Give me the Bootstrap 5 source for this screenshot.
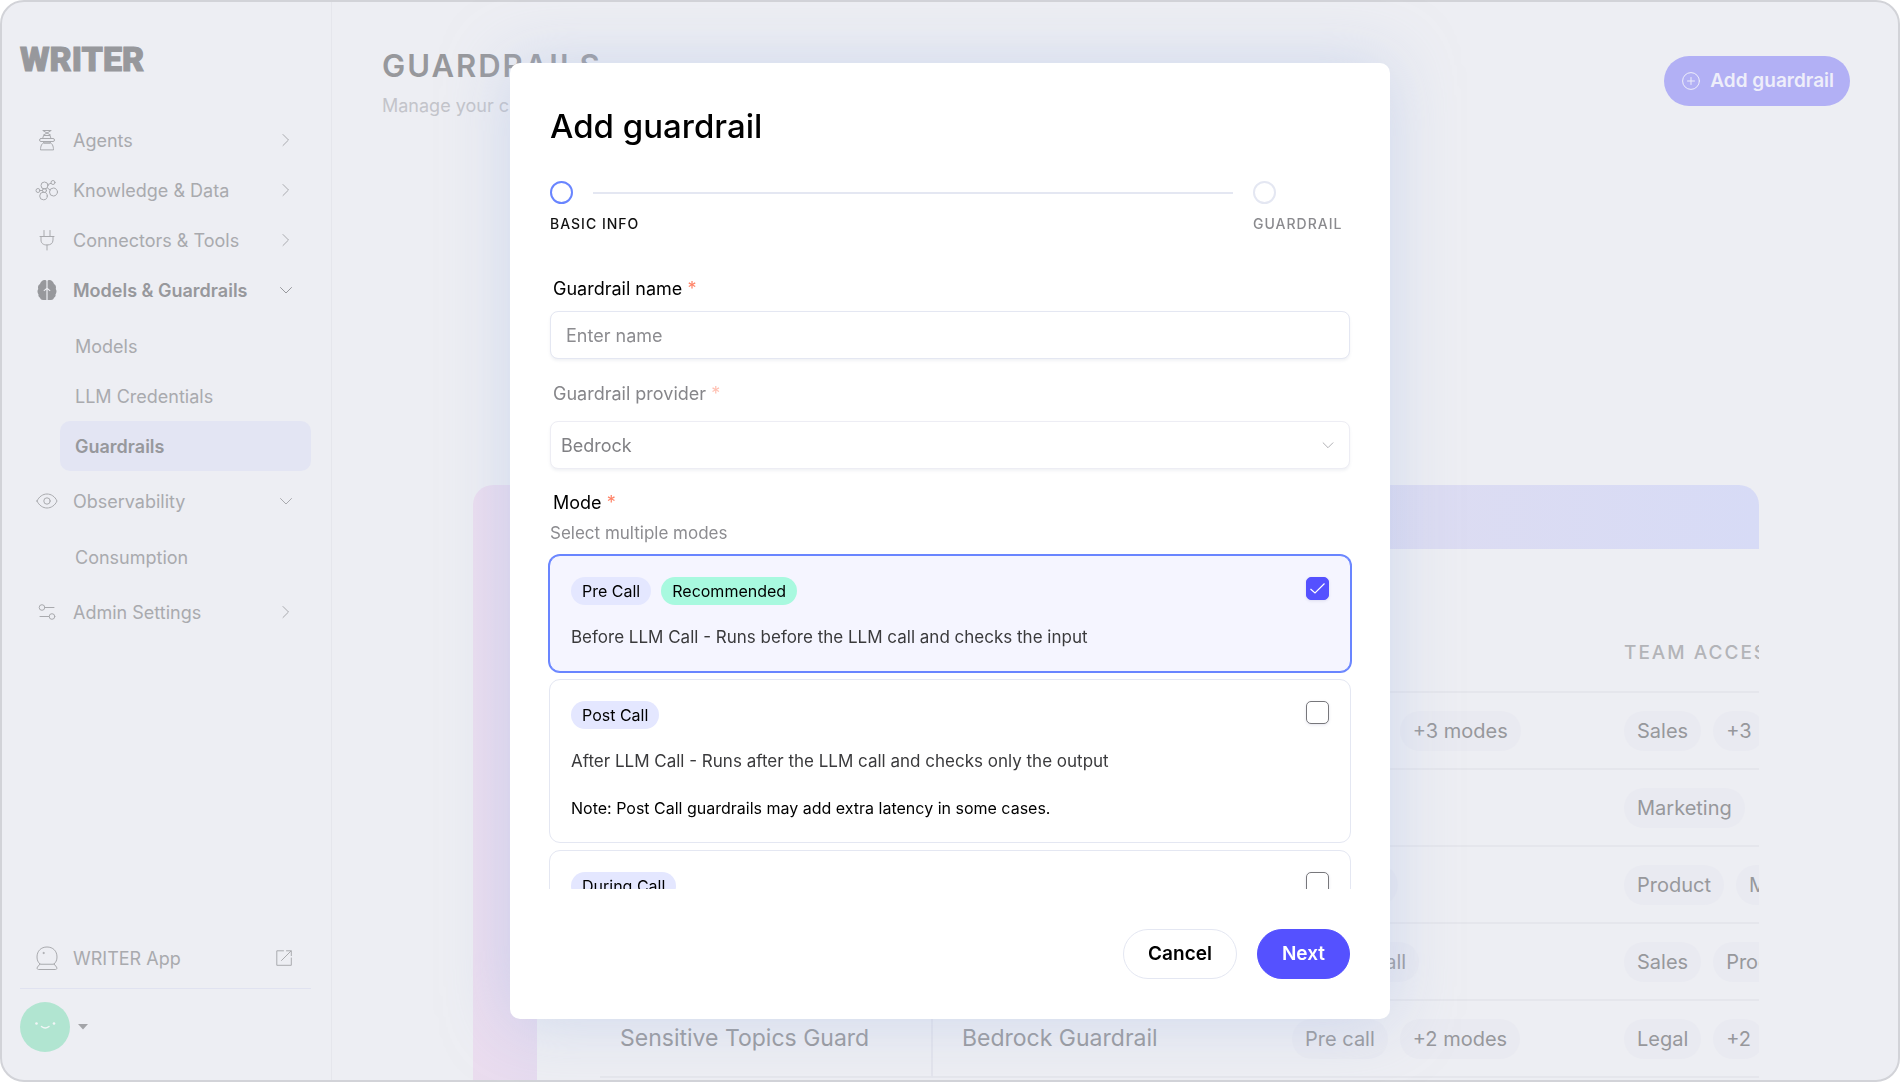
<!DOCTYPE html>
<html lang="en">
<head>
<meta charset="utf-8">
<meta name="viewport" content="width=device-width, initial-scale=1">
<title>Writer – Guardrails</title>
<link href="https://cdn.jsdelivr.net/npm/bootstrap@5.3.0/dist/css/bootstrap.min.css" rel="stylesheet">
<style>
  :root { --ink: #97989c; --soft: #a9aaae; --faint: #c3c4ca; --wash: #edeef3; --hair: #e5e6ec; --brand: #5551ff; --ring: #6985ff; --edge: #e4e7f2; }
  body { font-family: Inter, "Open Sans", sans-serif; background: #fff; color: #000; }
  a { text-decoration: none; }
  svg { display: block; fill: none; stroke: currentColor; stroke-linecap: round; stroke-linejoin: round; }
  .shell { height: 100vh; background: var(--wash); border: 2px solid #d2d3d8; border-radius: 24px; }

  /* sidebar */
  .sidebar { width: 330px; flex: none; border-right: 1px solid var(--hair); padding: 32px 20px 28px 18px; }
  .wordmark { font-family: Roboto, Inter, sans-serif; font-size: 34px; font-weight: 900; line-height: 50px; color: var(--ink); -webkit-text-stroke: 1px var(--ink); margin-bottom: 31px; }
  .side-link { height: 50px; padding: 0 19px 0 15px; gap: 14px; font-size: 18px; color: var(--soft); }
  .side-link.open { color: var(--ink); font-weight: 600; }
  .side-link svg { flex: none; }
  .sub { margin: 6px 0 5px 40px; }
  .sub a { height: 50px; padding-left: 15px; border-radius: 10px; font-size: 18px; color: var(--soft); }
  .sub a.on { background: #e3e5f3; color: var(--ink); font-weight: 600; }
  .side-foot { border-top: 1px solid #e0e2f0; padding-top: 13px; margin-top: 5px; }

  /* page behind the dialog */
  .content-area { padding: 54px 48px 0 50px; }
  .page-title { font-size: 31px; font-weight: 600; letter-spacing: 2px; line-height: 20px; color: var(--ink); margin-bottom: 16px; }
  .page-sub { font-size: 18px; line-height: 28px; color: var(--faint); }
  .btn-add { height: 50px; border-radius: 25px; padding: 0 16px 0 18px; gap: 10px; background: #b2b0f5; color: #eeeefa; border: 0; font-size: 19px; font-weight: 600; }
  .hero { margin: 365px 91px 0; padding: 64px 0 0 64px; border-radius: 20px 20px 0 0; background: linear-gradient(90deg, #ebddef 0, #e0d9ef 10%, #d8d7f0 45%, #dcdcf2 75%, #d7dbf6 100%); overflow: hidden; }
  .hero-inner { background: var(--wash); height: 100%; padding-left: 63px; overflow: hidden; }
  .grid { width: 1290px; table-layout: fixed; border-collapse: separate; border-spacing: 0; color: var(--ink); }
  .grid th { height: 144px; vertical-align: bottom; padding: 0 0 24px 16px; font-size: 19px; font-weight: 500; line-height: 28px; letter-spacing: 2px; color: #b3b4b8; border-bottom: 2px solid var(--hair); }
  .grid td { height: 77px; padding: 0 0 0 16px; border-bottom: 2px solid var(--hair); font-size: 23px; white-space: nowrap; }
  .grid td:nth-child(1) { padding-left: 20px; }
  .grid td:nth-child(2) { padding-left: 29px; }
  .grid td:first-child, .grid th:first-child { border-right: 2px solid #e3e4ec; }
  .tag { display: inline-block; height: 40px; line-height: 40px; padding: 0 13px; border-radius: 20px; background: #e9eaf1; font-size: 20px; margin-right: 12px; vertical-align: middle; }

  /* dialog */
  .modal { --bs-modal-width: 880px; overflow: hidden; }
  .modal-dialog { margin-top: 63px; margin-bottom: 63px; }
  .modal-content { height: calc(100vh - 126px); border: 0; border-radius: 10px; padding: 40px 0; box-shadow: 0 0 64px rgba(176, 193, 232, .5); }
  .modal-header { padding: 0 40px; border: 0; }
  .modal-title { font-size: 33px; font-weight: 500; line-height: 46px; margin-bottom: 2px; }
  .steps { padding: 30px 40px 41px; gap: 20px; }
  .dot { width: 23px; height: 23px; border: 2px solid var(--edge); border-radius: 50%; margin-bottom: 10px; }
  .step { flex: none; font-size: 14px; font-weight: 500; line-height: 20px; letter-spacing: 1px; color: #8a8a8e; }
  .step.first { width: 23px; white-space: nowrap; color: #111; }
  .step.first .dot { border-color: var(--ring); }
  .step.last { width: 97px; }
  .rail { height: 2px; margin-top: 11px; background: var(--edge); }
  .modal-body { padding: 0 40px; overflow-y: auto; scrollbar-width: none; }
  .modal-body::-webkit-scrollbar { display: none; }
  .lbl { font-size: 18px; line-height: 28px; padding-left: 3px; display: block; margin-bottom: 8px; }
  .lbl.dim { margin: 21px 0 13px; }
  .lbl.group { margin: 20px 0 4px; }
  .req { color: #ff8266; }
  .box { height: 48px; border: 1px solid var(--edge); border-radius: 8px; font-size: 18px; padding: 0 15px; box-shadow: 0 2px 3px rgba(120, 125, 160, .1); }
  .box::placeholder { color: #8c8c90; }
  .box.pick { background-color: #fff; padding-left: 10px; color: #808084; border-color: #ededf4; opacity: 1; background-image: url("data:image/svg+xml,%3Csvg xmlns='http://www.w3.org/2000/svg' viewBox='0 0 12 12'%3E%3Cpath fill='none' stroke='%23b0b0b4' d='M.8 3.5 6 8.7l5.200-5.200'/%3E%3C/svg%3E"); background-size: 12px; background-position: right 15px center; }
  .dim { color: #86868a; }
  .dim .req { color: #ffc0b2; }
  .hint { font-size: 17px; line-height: 24px; color: #8c8c90; margin-bottom: 10px; }
  .opts { gap: 7px; margin: 0 -1px; }
  .opt { border: 1px solid var(--edge); border-radius: 11px; padding: 21px 21px 22px; cursor: pointer; }
  .opt.on { border-color: var(--ring); box-shadow: 0 0 0 1px var(--ring); background: #f5f5ff; }
  .chips { gap: 10px; }
  .chip { height: 28px; line-height: 28px; border-radius: 14px; padding: 0 11px; font-size: 16px; background: #e4e7ff; }
  .chip.good { background: #a8f9df; }
  .opt p { font-size: 17px; line-height: 24px; margin: 20px 0 0; color: #3a3a3c; }
  .opt p.note { font-size: 16px; margin-top: 23px; color: #000; }
  .opt .form-check-input { width: 23px; height: 23px; margin: 0; border: 1px solid #77777b; border-radius: 5px; box-shadow: 0 1px 3px rgba(80, 80, 140, .15); }
  .opt .form-check-input:checked { background-color: var(--brand); border-color: var(--brand); background-size: 17px; background-image: url("data:image/svg+xml,%3Csvg xmlns='http://www.w3.org/2000/svg' viewBox='0 0 17 17'%3E%3Cpath fill='none' stroke='white' stroke-width='1.200' d='M1.500 9 6 13 15.500 3.500'/%3E%3C/svg%3E"); }
  .modal-footer { padding: 40px 40px 0; border: 0; gap: 20px; }
  .pill-btn { height: 50px; border-radius: 25px; padding: 0 24px; margin: 0; font-size: 19px; font-weight: 600; color: #000; border: 1px solid var(--edge); }
  .pill-btn.go, .pill-btn.go:hover { background: var(--brand); border-color: var(--brand); color: #fff; }
</style>
<script src="https://cdn.jsdelivr.net/npm/bootstrap@5.3.0/dist/js/bootstrap.bundle.min.js"></script>
</head>
<body>
<div class="shell d-flex overflow-hidden">
  <nav class="sidebar d-flex flex-column" aria-label="Main">
    <div class="wordmark">WRITER</div>
    <a href="#" class="side-link d-flex align-items-center">
      <svg width="24" height="24" viewBox="0 0 24 24"><path d="M8 2.500h8M8.500 3l7 4M15.500 3l-7 4M9 7.500h6l1 3H8zM6 10.500h12a1.500 1.500 0 0 1 0 3H6a1.500 1.500 0 0 1 0-3zM8 13.500l1 1.500h6l1-1.500M5.500 21.500c0-3.500 1.500-6.500 3.500-6.500h6c2 0 3.500 3 3.500 6.500z"/></svg>
      <span class="flex-grow-1">Agents</span>
      <svg width="12" height="14" viewBox="0 0 12 14"><path d="M3 1.500 8.500 7 3 12.500"/></svg>
    </a>
    <a href="#" class="side-link d-flex align-items-center">
      <svg width="24" height="24" viewBox="0 0 24 24"><circle cx="9.500" cy="7.500" r="3.500"/><circle cx="18" cy="4.500" r="2"/><circle cx="18.500" cy="14" r="4"/><circle cx="8.500" cy="18" r="3.800"/><circle cx="3" cy="12.500" r="2"/><circle cx="9.500" cy="12.500" r="2"/><path d="M13 6.500l3-1.200M5 12.500h2.500M12.500 10l2.500 2"/></svg>
      <span class="flex-grow-1">Knowledge &amp; Data</span>
      <svg width="12" height="14" viewBox="0 0 12 14"><path d="M3 1.500 8.500 7 3 12.500"/></svg>
    </a>
    <a href="#" class="side-link d-flex align-items-center">
      <svg width="24" height="24" viewBox="0 0 24 24"><path d="M5 8.500h14M6 8.500V12c0 3.500 2.500 5 6 5s6-1.500 6-5V8.500M9 2.500v6M15 2.500v6M12 17v5"/></svg>
      <span class="flex-grow-1">Connectors &amp; Tools</span>
      <svg width="12" height="14" viewBox="0 0 12 14"><path d="M3 1.500 8.500 7 3 12.500"/></svg>
    </a>
    <a href="#" class="side-link open d-flex align-items-center">
      <svg width="24" height="24" viewBox="0 0 24 24" stroke-width="0"><path fill="currentColor" d="M11.400 3v7L8.500 12.500l.6.700 2.300-1.800V22H8c-1.500 0-2.500-1-3-2.300-1.500-.6-1.800-2-1.500-3.200-1.300-1.700-1.300-4.300-.3-5.500C2.500 8.500 3.500 6.500 5 6c.5-2 2.500-4 4.500-4 1 0 1.900.3 1.900 1zM12.600 3v7l2.900 2.500-.6.700-2.300-1.800V22H16c1.500 0 2.500-1 3-2.300 1.500-.6 1.800-2 1.500-3.200 1.300-1.700 1.300-4.300.3-5.500.7-2.500-.3-4.500-1.800-5-.5-2-2.500-4-4.500-4-1 0-1.900.3-1.900 1z"/></svg>
      <span class="flex-grow-1">Models &amp; Guardrails</span>
      <svg width="12" height="14" viewBox="0 0 12 14"><path d="M.5 4.500 6 10l5.500-5.500"/></svg>
    </a>
    <div class="sub">
      <a href="#" class="d-flex align-items-center">Models</a>
      <a href="#" class="d-flex align-items-center">LLM Credentials</a>
      <a href="#" class="on d-flex align-items-center" aria-current="page">Guardrails</a>
    </div>
    <a href="#" class="side-link d-flex align-items-center">
      <svg width="24" height="24" viewBox="0 0 24 24"><path d="M2 12c2-4.500 6-7 10-7s8 2.500 10 7c-2 4.500-6 7-10 7s-8-2.500-10-7z"/><circle cx="12" cy="12" r="3.200"/></svg>
      <span class="flex-grow-1">Observability</span>
      <svg width="12" height="14" viewBox="0 0 12 14"><path d="M.5 4.500 6 10l5.500-5.500"/></svg>
    </a>
    <div class="sub"><a href="#" class="d-flex align-items-center">Consumption</a></div>
    <a href="#" class="side-link d-flex align-items-center">
      <svg width="24" height="24" viewBox="0 0 24 24"><circle cx="7" cy="7.500" r="2.800"/><path d="M10 7.500h9M5 16.500h9"/><circle cx="17" cy="16.500" r="2.800"/></svg>
      <span class="flex-grow-1">Admin Settings</span>
      <svg width="12" height="14" viewBox="0 0 12 14"><path d="M3 1.500 8.500 7 3 12.500"/></svg>
    </a>
    <div class="mt-auto">
      <a href="#" class="side-link d-flex align-items-center">
        <svg width="24" height="26" viewBox="0 0 24 26"><path d="M5 19c-2-1.500-3-4-3-7C2 6 6 2 12 2s10 4 10 10c0 3-1 5.500-3 7zM5 19l-2.500 3c-.8 1.300-.3 2.500 1 2.500h17c1.300 0 1.800-1.200 1-2.500L19 19"/><circle cx="8.500" cy="8" r=".6"/></svg>
        <span class="flex-grow-1">WRITER App</span>
        <svg width="16" height="16" viewBox="0 0 16 16"><path d="M7.500.8H.8v14.500h14.500V8M10.500.8h4.800v4.800M15 1 5.500 10.500"/></svg>
      </a>
      <div class="side-foot d-flex align-items-center gap-2">
        <svg width="50" height="50" viewBox="0 0 50 50" stroke-width="0" role="img" aria-label="Account"><circle cx="25" cy="25" r="25" fill="#b1e5d1"/><circle cx="16.500" cy="21.500" r="1.300" fill="#f2f6f6"/><circle cx="34" cy="21.500" r="1.300" fill="#f2f6f6"/><path d="M21.500 24.500q3.700 3 7.500 0" fill="none" stroke="#f2f6f6" stroke-width="1.500"/></svg>
        <svg width="10" height="6" viewBox="0 0 10 6" stroke-width="0"><path d="M0 0h10L5 5.500z" fill="#a3a4a8"/></svg>
      </div>
    </div>
  </nav>

  <main class="content-area flex-grow-1 d-flex flex-column overflow-hidden">
    <div class="d-flex justify-content-between align-items-start">
      <div>
        <h1 class="page-title">GUARDRAILS</h1>
        <div class="page-sub">Manage your c</div>
      </div>
      <button type="button" class="btn btn-add d-flex align-items-center">
        <svg width="18" height="18" viewBox="0 0 18 18"><circle cx="9" cy="9" r="8.400"/><path d="M9 5.500v7M5.500 9h7"/></svg>
        Add guardrail
      </button>
    </div>
    <section class="hero flex-grow-1">
      <div class="hero-inner">
        <table class="grid">
          <colgroup><col style="width:333px"><col style="width:343px"><col style="width:332px"><col></colgroup>
          <thead><tr><th></th><th></th><th></th><th>TEAM ACCESS</th></tr></thead>
          <tbody>
            <tr><td></td><td></td><td><span class="tag">Pre call</span><span class="tag">+3 modes</span></td><td><span class="tag">Sales</span><span class="tag">+3</span></td></tr>
            <tr><td></td><td></td><td></td><td><span class="tag">Marketing</span></td></tr>
            <tr><td></td><td></td><td><span class="tag">Post call</span></td><td><span class="tag">Product</span><span class="tag">Marketing</span></td></tr>
            <tr><td></td><td></td><td><span class="tag">During call</span></td><td><span class="tag">Sales</span><span class="tag">Product</span></td></tr>
            <tr><td>Sensitive Topics Guard</td><td>Bedrock Guardrail</td><td><span class="tag">Pre call</span><span class="tag">+2 modes</span></td><td><span class="tag">Legal</span><span class="tag">+2</span></td></tr>
          </tbody>
        </table>
      </div>
    </section>
  </main>
</div>

<div class="modal d-block" role="dialog" aria-labelledby="dlg-title">
  <div class="modal-dialog">
    <form class="modal-content">
      <div class="modal-header"><h2 class="modal-title" id="dlg-title">Add guardrail</h2></div>
      <div class="steps d-flex">
        <div class="step first"><div class="dot"></div>BASIC INFO</div>
        <div class="rail flex-grow-1"></div>
        <div class="step last"><div class="dot"></div>GUARDRAIL</div>
      </div>
      <div class="modal-body">
        <label class="lbl" for="g-name">Guardrail name <span class="req">*</span></label>
        <input id="g-name" class="form-control box" type="text" placeholder="Enter name">
        <label class="lbl dim" for="g-prov">Guardrail provider <span class="req">*</span></label>
        <select id="g-prov" class="form-select box pick" disabled><option>Bedrock</option></select>
        <div class="lbl group">Mode <span class="req">*</span></div>
        <div class="hint">Select multiple modes</div>
        <div class="opts d-flex flex-column">
          <label class="opt on d-block">
            <span class="d-flex justify-content-between">
              <span class="chips d-flex"><span class="chip">Pre Call</span><span class="chip good">Recommended</span></span>
              <input class="form-check-input" type="checkbox" checked>
            </span>
            <p>Before LLM Call - Runs before the LLM call and checks the input</p>
          </label>
          <label class="opt d-block">
            <span class="d-flex justify-content-between"><span class="chip">Post Call</span><input class="form-check-input" type="checkbox"></span>
            <p>After LLM Call - Runs after the LLM call and checks only the output</p>
            <p class="note">Note: Post Call guardrails may add extra latency in some cases.</p>
          </label>
          <label class="opt d-block">
            <span class="d-flex justify-content-between"><span class="chip">During Call</span><input class="form-check-input" type="checkbox"></span>
            <p>During LLM Call - Runs in parallel with the LLM call</p>
          </label>
        </div>
      </div>
      <div class="modal-footer">
        <button type="button" class="btn pill-btn">Cancel</button>
        <button type="button" class="btn pill-btn go">Next</button>
      </div>
    </form>
  </div>
</div>
</body>
</html>
